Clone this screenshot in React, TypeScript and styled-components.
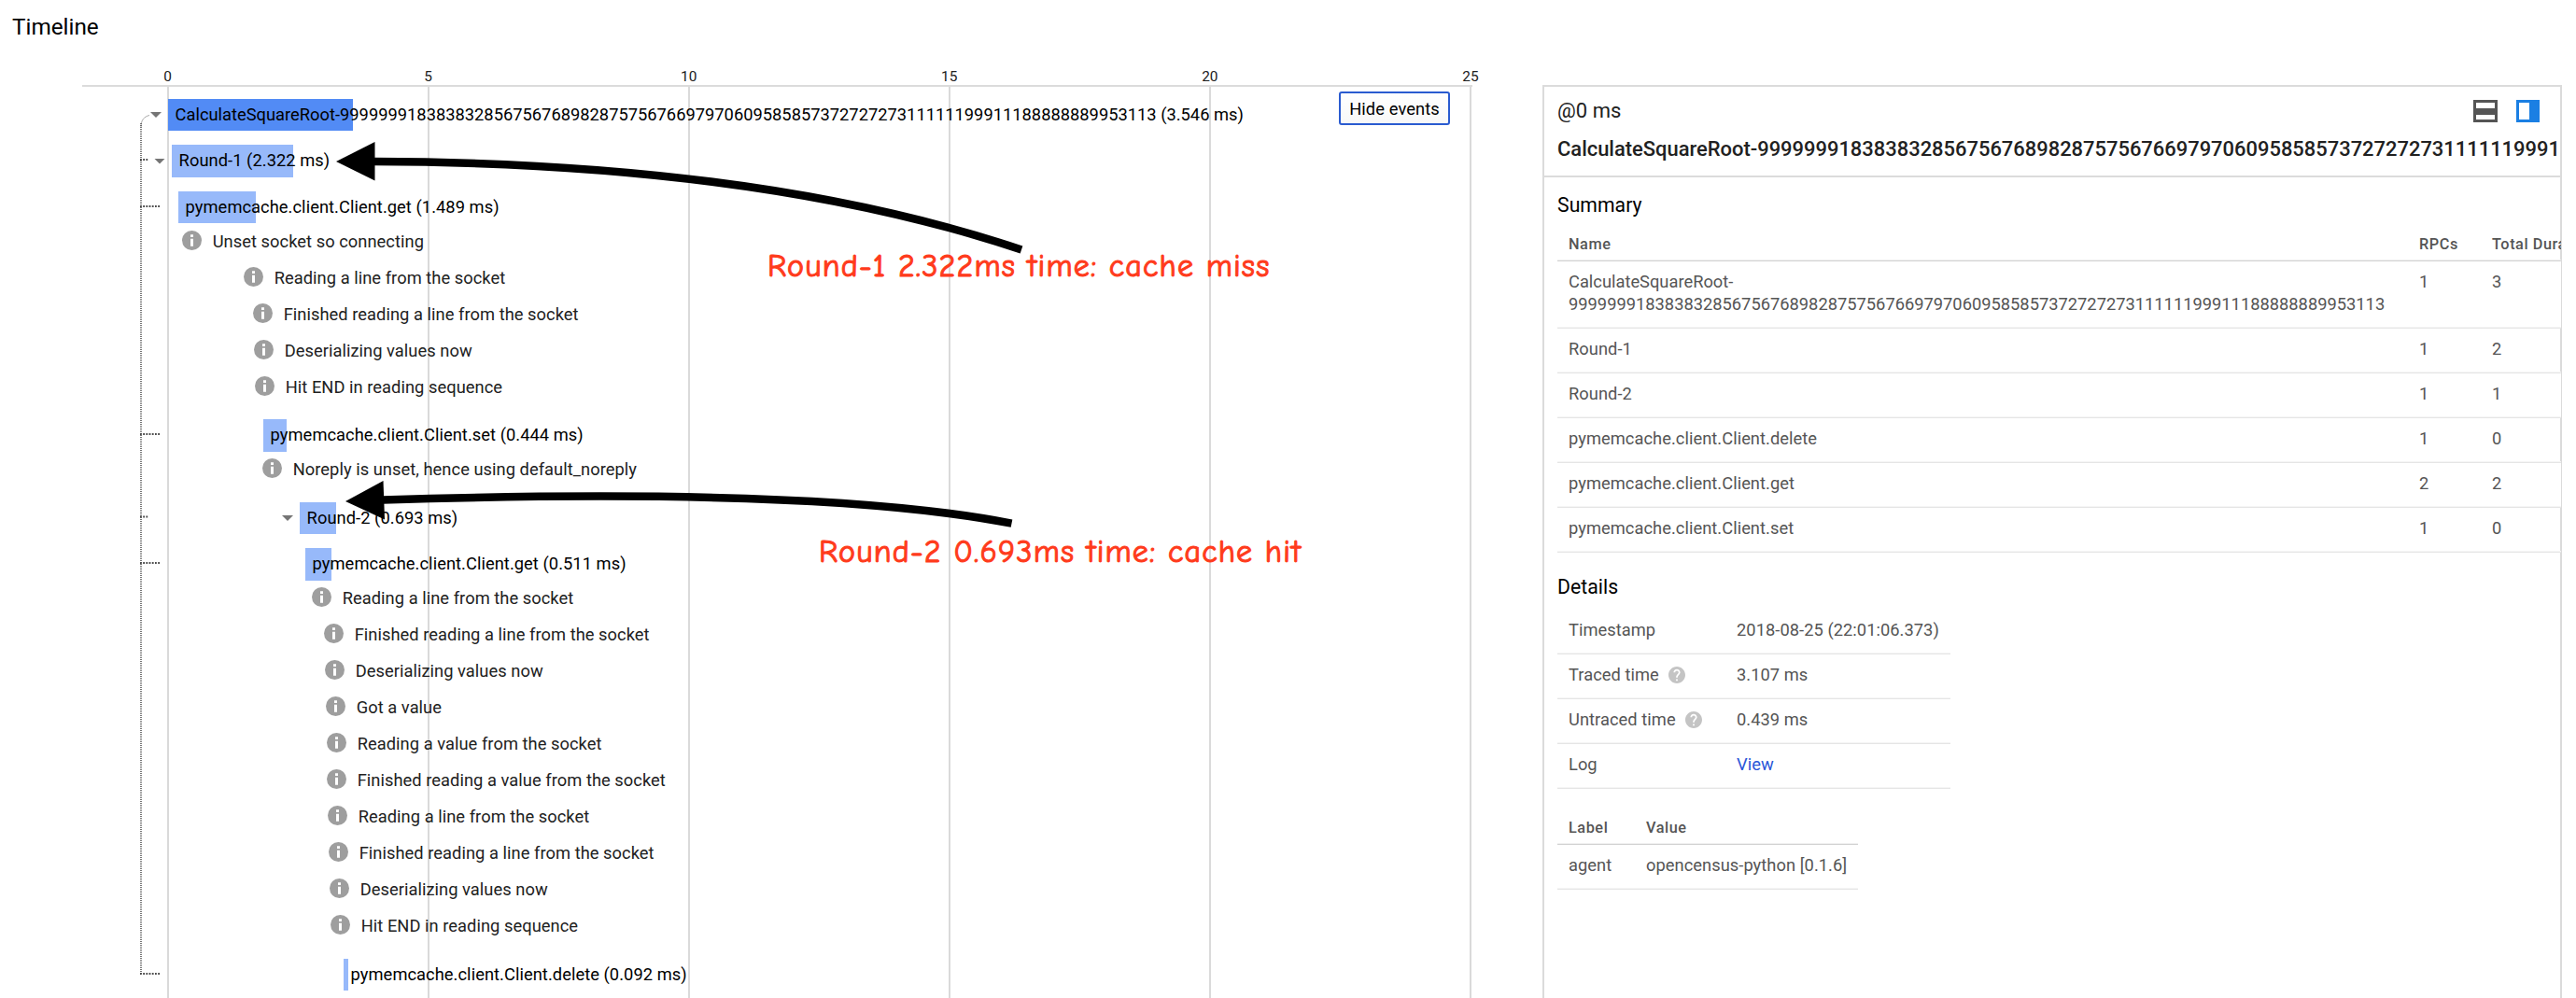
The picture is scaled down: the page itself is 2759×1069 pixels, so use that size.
import React from 'react';
import styled, { createGlobalStyle } from 'styled-components';

const GlobalStyle = createGlobalStyle`
  *, *::before, *::after { box-sizing: border-box; }
  body {
    margin: 0;
    background: #fff;
    color: #212121;
    font-family: Roboto, "Liberation Sans", sans-serif;
    font-size: 18.3px;
    letter-spacing: 0.05px;
    overflow: hidden;
  }
`;

const ROOT_NUMBER =
  '9999999183838328567567689828757567669797060958585737272727311111199911188888889953113';
const ROOT_NAME = `CalculateSquareRoot-${ROOT_NUMBER}`;

const Page = styled.main`
  display: flex;
  flex-direction: column;
  width: 2759px;
  height: 1069px;
  overflow: hidden;
  position: relative;
`;

const PageTitle = styled.h1`
  margin: 0;
  padding-left: 13px;
  height: 57px;
  line-height: 57px;
  font-size: 24.3px;
  font-weight: 400;
  letter-spacing: 0;
  color: #000;
`;

const Columns = styled.div`
  display: flex;
  flex: 1;
  align-items: stretch;
`;

/* ---------- timeline ---------- */

const Timeline = styled.section`
  display: flex;
  flex-direction: column;
  flex: none;
  width: 1577px;
`;

const Axis = styled.div`
  display: flex;
  justify-content: space-between;
  height: 36px;
  margin-left: 88px;
  padding: 8px 2px 0 91.5px;
  border-bottom: 2px solid #dbdbdb;
`;

const Tick = styled.span`
  display: flex;
  justify-content: center;
  width: 0;
  font-size: 15.4px;
  line-height: 34px;
`;

const Plot = styled.div`
  position: relative;
  flex: 1;
  padding-top: 5.25px;
`;

const GridLines = styled.div`
  position: absolute;
  inset: 0 1px 0 179px;
  display: flex;
  justify-content: space-between;
`;

const GridLine = styled.i`
  width: 2px;
  background: #dadada;
`;

const Rows = styled.div`
  position: relative;
  display: flex;
  flex-direction: column;
`;

const SpanRow = styled.div<{ $start: number; $toggle?: boolean }>`
  display: flex;
  align-items: center;
  height: 49.5px;
  padding-left: ${(p) => p.$start - (p.$toggle ? 19 : 0)}px;
`;

const Toggle = styled.span`
  flex: none;
  width: 12px;
  height: 6px;
  margin-right: 7px;
  background: #757575;
  clip-path: polygon(0 0, 100% 0, 50% 100%);
`;

const Bar = styled.div<{ $width: number; $root?: boolean }>`
  flex: none;
  width: ${(p) => p.$width}px;
  height: 34.5px;
  text-indent: 7.6px;
  line-height: 34.5px;
  white-space: nowrap;
  color: #000;
  letter-spacing: ${(p) => (p.$root ? 0.015 : 0.06)}px;
  background: ${(p) => (p.$root ? '#528bf5' : '#97b9fa')};
`;

const EventList = styled.ul`
  list-style: none;
  margin: -9px 0 9px;
  padding: 0;
`;

const EventRow = styled.li<{ $start: number }>`
  display: flex;
  align-items: center;
  gap: 11.7px;
  height: 39px;
  padding-left: ${(p) => p.$start}px;
  white-space: nowrap;
`;

const EventText = styled.span`
  line-height: 24px;
  padding-top: 2.6px;
`;

const HideButton = styled.button`
  position: absolute;
  top: 5px;
  right: 24px;
  width: 119px;
  height: 36px;
  padding: 0;
  border: 2px solid #2a5bd0;
  border-radius: 3px;
  background: linear-gradient(#fff, #f8f8f8);
  font: inherit;
  letter-spacing: 0.1px;
  line-height: 31px;
  color: #000;
`;

const Connectors = styled.svg`
  position: absolute;
  left: 140px;
  top: 0;
  width: 40px;
  height: 976px;
`;

/* ---------- annotations drawn over the page ---------- */

const Arrows = styled.svg`
  position: absolute;
  left: 0;
  top: 0;
  width: 1577px;
  height: 1069px;
  pointer-events: none;
`;

const Note = styled.p<{ $x: number; $y: number }>`
  position: absolute;
  left: ${(p) => p.$x}px;
  top: ${(p) => p.$y}px;
  margin: 0;
  font-family: "Comic Neue", "Comic Sans MS", cursive;
  font-size: 34px;
  line-height: 40px;
  letter-spacing: 1.17px;
  white-space: pre;
  color: #ff3b1c;
  -webkit-text-stroke: 1.1px #ff3b1c;
`;

/* ---------- details panel ---------- */

const Panel = styled.aside`
  flex: none;
  display: flex;
  flex-direction: column;
  width: 1092px;
  margin: 34px 0 0 75px;
  border: 2px solid #dbdbdb;
  border-bottom: 0;
  color: #555;
`;

const PanelHead = styled.header`
  height: 97px;
  padding: 10px 0 0 14px;
  border-bottom: 2px solid #dbdbdb;
  overflow: hidden;
  color: #212121;
`;

const HeadLine = styled.div`
  display: flex;
  align-items: center;
  justify-content: space-between;
  height: 31px;
  padding-right: 22px;
  font-size: 22px;
`;

const SpanName = styled.div`
  line-height: 52px;
  font-size: 21.93px;
  font-weight: 500;
  letter-spacing: 0;
  white-space: nowrap;
`;

const Layouts = styled.div`
  display: flex;
  gap: 20px;
`;

/* The body reaches over half of the frame, which the opaque rows then cover. */
const PanelBody = styled.div`
  position: relative;
  margin-right: -1px;
  padding-left: 14px;
  overflow: hidden;
`;

const Heading = styled.h2<{ $offset?: number }>`
  margin: 0;
  height: ${(p) => (p.$offset ? 61 : 59)}px;
  padding-top: ${(p) => p.$offset ?? 0}px;
  line-height: ${(p) => (p.$offset ? 46 : 59)}px;
  font-size: 21.2px;
  font-weight: 400;
  color: #000;
`;

const Table = styled.div<{ $cols: string; $width?: number; $top?: number }>`
  display: grid;
  grid-template-columns: ${(p) => p.$cols};
  width: ${(p) => (p.$width ? `${p.$width}px` : 'auto')};
  margin-top: ${(p) => p.$top ?? 0}px;
`;

const HeadCell = styled.div`
  height: 31px;
  padding-left: 12px;
  line-height: 25px;
  font-size: 16.3px;
  font-weight: 500;
  letter-spacing: 0.55px;
  white-space: nowrap;
  border-bottom: 1px solid #d2d2d2;
  box-shadow: inset 0 -1px #f0f0f0;
`;

const Cell = styled.div<{ $solid?: boolean }>`
  display: flex;
  align-items: flex-start;
  gap: 10px;
  padding: 10px 0 13px 12px;
  line-height: 24px;
  white-space: nowrap;
  border-bottom: 1px solid #e5e5e5;
  box-shadow: inset 0 -1px #f5f5f5;
  background: ${(p) => (p.$solid ? '#fff' : 'transparent')};
`;

const LongName = styled.span`
  letter-spacing: 0.01px;
`;

const Link = styled.a`
  color: #2a56d8;
`;

const HelpSlot = styled.span`
  display: flex;
  padding-top: 3px;
`;

const HelpIcon = () => (
  <svg width="18" height="18" viewBox="2 2 20 20">
    <path
      fill="#c4c4c4"
      d="M12 2C6.48 2 2 6.48 2 12s4.48 10 10 10 10-4.48 10-10S17.52 2 12 2zm1 17h-2v-2h2v2zm2.07-7.75l-.9.92C13.45 12.9 13 13.5 13 15h-2v-.5c0-1.1.45-2.1 1.17-2.83l1.24-1.26c.37-.36.59-.86.59-1.41 0-1.1-.9-2-2-2s-2 .9-2 2H8c0-2.21 1.79-4 4-4s4 1.79 4 4c0 .88-.36 1.68-.93 2.25z"
    />
  </svg>
);

const InfoIcon = () => (
  <svg width="21" height="21" viewBox="0 0 21 21">
    <circle cx="10.5" cy="10.5" r="10.5" fill="#9e9e9e" />
    <path fill="#fff" d="M9 4.3h3v2.8H9zM9 8.7h3v8H9z" />
  </svg>
);

const Events = ({ list }: { list: [number, string][] }) => (
  <EventList>
    {list.map(([x, text]) => (
      <EventRow key={x + text} $start={x}>
        <InfoIcon />
        <EventText>{text}</EventText>
      </EventRow>
    ))}
  </EventList>
);

const TICKS = [0, 5, 10, 15, 20, 25];

const summary: [React.ReactNode, number, number][] = [
  [
    <LongName key="root">
      CalculateSquareRoot-
      <br />
      {ROOT_NUMBER}
    </LongName>,
    1,
    3,
  ],
  ['Round-1', 1, 2],
  ['Round-2', 1, 1],
  ['pymemcache.client.Client.delete', 1, 0],
  ['pymemcache.client.Client.get', 2, 2],
  ['pymemcache.client.Client.set', 1, 0],
];

const details: [string, React.ReactNode, boolean][] = [
  ['Timestamp', '2018-08-25 (22:01:06.373)', false],
  ['Traced time', '3.107 ms', true],
  ['Untraced time', '0.439 ms', true],
  ['Log', <Link key="log">View</Link>, false],
];

export default function App() {
  return (
    <Page>
      <GlobalStyle />
      <PageTitle>Timeline</PageTitle>
      <Columns>
        <Timeline>
          <Axis>
            {TICKS.map((t) => (
              <Tick key={t}>{t}</Tick>
            ))}
          </Axis>
          <Plot>
            <GridLines>
              {TICKS.map((t) => (
                <GridLine key={t} />
              ))}
            </GridLines>
            <Connectors viewBox="140 93 40 976" fill="none" stroke="#4a4a4a">
              <path d="M160 123.5C154 125 151 129 151 136" strokeWidth="1" stroke="#aaa" />
              <path d="M151 132V1044" strokeWidth="1.5" strokeDasharray="1 1" />
              <path
                d="M150 171H159.5M150 221H171.5M150 465H171.5M150 553.5H159.5M150 603H171.5M150 1043H171.5"
                strokeWidth="2"
                strokeDasharray="1.8 1.4"
              />
            </Connectors>
            <Rows>
              <SpanRow $start={180} $toggle>
                <Toggle />
                <Bar $width={198} $root>{`${ROOT_NAME} (3.546 ms)`}</Bar>
              </SpanRow>
              <SpanRow $start={184} $toggle>
                <Toggle />
                <Bar $width={130}>Round-1 (2.322 ms)</Bar>
              </SpanRow>
              <SpanRow $start={191}>
                <Bar $width={83}>pymemcache.client.Client.get (1.489 ms)</Bar>
              </SpanRow>
              <Events
                list={[
                  [195, 'Unset socket so connecting'],
                  [261, 'Reading a line from the socket'],
                  [271, 'Finished reading a line from the socket'],
                  [272, 'Deserializing values now'],
                  [273, 'Hit END in reading sequence'],
                ]}
              />
              <SpanRow $start={282}>
                <Bar $width={25}>pymemcache.client.Client.set (0.444 ms)</Bar>
              </SpanRow>
              <Events list={[[281, 'Noreply is unset, hence using default_noreply']]} />
              <SpanRow $start={321} $toggle>
                <Toggle />
                <Bar $width={39}>Round-2 (0.693 ms)</Bar>
              </SpanRow>
              <SpanRow $start={327}>
                <Bar $width={28}>pymemcache.client.Client.get (0.511 ms)</Bar>
              </SpanRow>
              <Events
                list={[
                  [334, 'Reading a line from the socket'],
                  [347, 'Finished reading a line from the socket'],
                  [348, 'Deserializing values now'],
                  [349, 'Got a value'],
                  [350, 'Reading a value from the socket'],
                  [350, 'Finished reading a value from the socket'],
                  [351, 'Reading a line from the socket'],
                  [352, 'Finished reading a line from the socket'],
                  [353, 'Deserializing values now'],
                  [354, 'Hit END in reading sequence'],
                ]}
              />
              <SpanRow $start={368}>
                <Bar $width={5}>pymemcache.client.Client.delete (0.092 ms)</Bar>
              </SpanRow>
            </Rows>
            <HideButton>Hide events</HideButton>
          </Plot>
        </Timeline>

        <Panel>
          <PanelHead>
            <HeadLine>
              <span>@0 ms</span>
              <Layouts>
                <svg width="26" height="24" viewBox="0 0 26 24">
                  <path
                    fill="#555"
                    fillRule="evenodd"
                    d="M0 0H26V24H0ZM3 3V9H23V3ZM3 16V21H23V16Z"
                  />
                </svg>
                <svg width="25" height="24" viewBox="0 0 25 24">
                  <path fill="#1b7fe3" fillRule="evenodd" d="M0 0H25V24H0ZM3 3V21H14V3Z" />
                </svg>
              </Layouts>
            </HeadLine>
            <SpanName>{ROOT_NAME}</SpanName>
          </PanelHead>
          <PanelBody>
            <Heading>Summary</Heading>
            <Table $cols="911px 78px 1fr">
              <HeadCell>Name</HeadCell>
              <HeadCell>RPCs</HeadCell>
              <HeadCell>Total Duration (ms)</HeadCell>
              {summary.map(([name, rpcs, total], i) => (
                <React.Fragment key={i}>
                  <Cell $solid={i % 2 === 0}>{name}</Cell>
                  <Cell $solid={i % 2 === 0}>{rpcs}</Cell>
                  <Cell $solid={i % 2 === 0}>{total}</Cell>
                </React.Fragment>
              ))}
            </Table>
            <Heading $offset={14}>Details</Heading>
            <Table $cols="180px 1fr" $width={421}>
              {details.map(([label, value, help]) => (
                <React.Fragment key={label}>
                  <Cell>
                    {label}
                    {help && (
                      <HelpSlot>
                        <HelpIcon />
                      </HelpSlot>
                    )}
                  </Cell>
                  <Cell>{value}</Cell>
                </React.Fragment>
              ))}
            </Table>
            <Table $cols="83px 1fr" $width={322} $top={29}>
              <HeadCell>Label</HeadCell>
              <HeadCell>Value</HeadCell>
              <Cell>agent</Cell>
              <Cell>opencensus-python [0.1.6]</Cell>
            </Table>
          </PanelBody>
        </Panel>
      </Columns>

      <Arrows viewBox="0 0 1577 1069">
        <g fill="none" stroke="#000" strokeWidth="8.5">
          <path d="M400 173Q815 174 1094 267.5" />
          <path d="M410 535.5Q883 521 1083.5 560.7" />
        </g>
        <path d="M360 173L401.5 152V193.5Z" />
        <path d="M370 537L410.5 515L412 556.5Z" />
      </Arrows>
      <Note $x={822} $y={265}>
        Round-1 2.322ms time: cache miss
      </Note>
      <Note $x={877} $y={571}>
        Round-2 0.693ms time: cache hit
      </Note>
    </Page>
  );
}
